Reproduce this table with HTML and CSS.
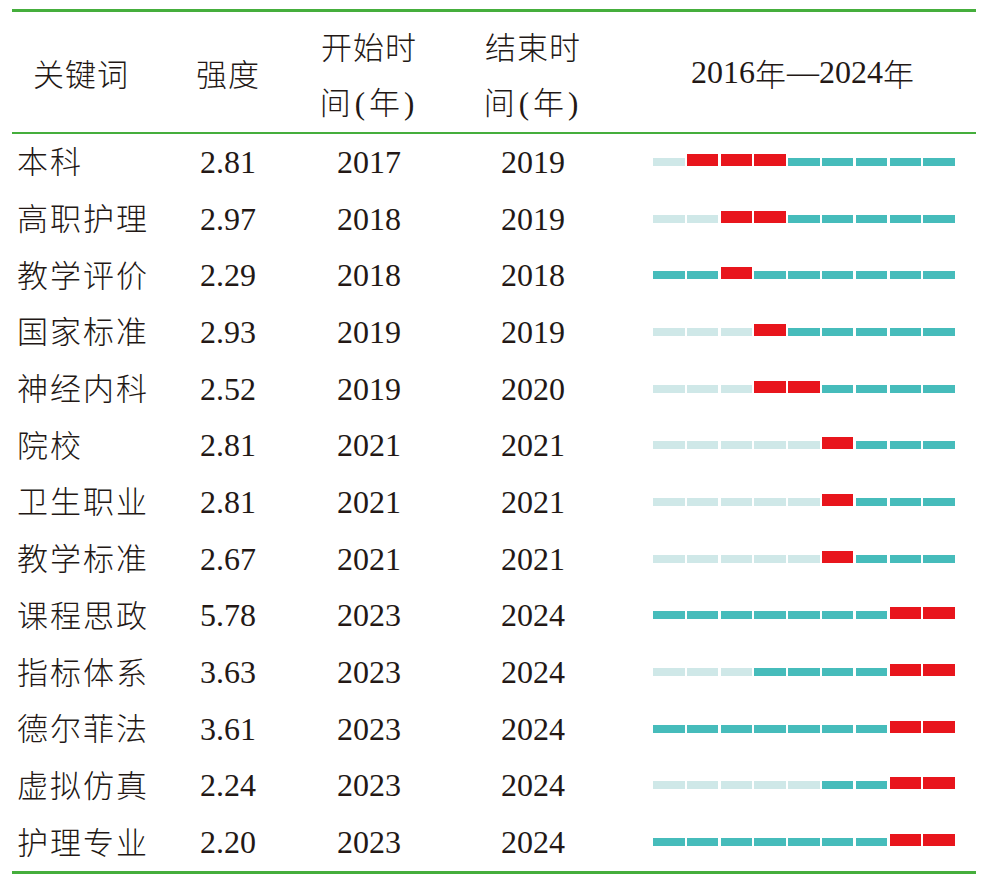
FILE: index.html
```html
<!DOCTYPE html>
<html lang="zh-CN">
<head>
<meta charset="utf-8">
<title>关键词突现</title>
<link rel="stylesheet" href="styles.css">
</head>
<body>
<div class="table">
  <div class="row head">
    <div class="cell c-kw">关键词</div>
    <div class="cell c-num cjk">强度</div>
    <div class="cell c-num cjk two">开始时<br>间<span class="paren">(</span>年<span class="paren">)</span></div>
    <div class="cell c-num cjk two">结束时<br>间<span class="paren">(</span>年<span class="paren">)</span></div>
    <div class="cell c-chart-h"><span class="num">2016</span><span class="cjk">年</span><span class="num">—2024</span><span class="cjk">年</span></div>
  </div>

  <div class="row"><div class="cell c-kw kw">本科</div><div class="cell c-num">2.81</div><div class="cell c-num">2017</div><div class="cell c-num">2019</div>
    <div class="cell c-chart"><div class="bars"><i class="l"></i><i class="r"></i><i class="r"></i><i class="r"></i><i class="t"></i><i class="t"></i><i class="t"></i><i class="t"></i><i class="t"></i></div></div></div>

  <div class="row"><div class="cell c-kw kw">高职护理</div><div class="cell c-num">2.97</div><div class="cell c-num">2018</div><div class="cell c-num">2019</div>
    <div class="cell c-chart"><div class="bars"><i class="l"></i><i class="l"></i><i class="r"></i><i class="r"></i><i class="t"></i><i class="t"></i><i class="t"></i><i class="t"></i><i class="t"></i></div></div></div>

  <div class="row"><div class="cell c-kw kw">教学评价</div><div class="cell c-num">2.29</div><div class="cell c-num">2018</div><div class="cell c-num">2018</div>
    <div class="cell c-chart"><div class="bars"><i class="t"></i><i class="t"></i><i class="r"></i><i class="t"></i><i class="t"></i><i class="t"></i><i class="t"></i><i class="t"></i><i class="t"></i></div></div></div>

  <div class="row"><div class="cell c-kw kw">国家标准</div><div class="cell c-num">2.93</div><div class="cell c-num">2019</div><div class="cell c-num">2019</div>
    <div class="cell c-chart"><div class="bars"><i class="l"></i><i class="l"></i><i class="l"></i><i class="r"></i><i class="t"></i><i class="t"></i><i class="t"></i><i class="t"></i><i class="t"></i></div></div></div>

  <div class="row"><div class="cell c-kw kw">神经内科</div><div class="cell c-num">2.52</div><div class="cell c-num">2019</div><div class="cell c-num">2020</div>
    <div class="cell c-chart"><div class="bars"><i class="l"></i><i class="l"></i><i class="l"></i><i class="r"></i><i class="r"></i><i class="t"></i><i class="t"></i><i class="t"></i><i class="t"></i></div></div></div>

  <div class="row"><div class="cell c-kw kw">院校</div><div class="cell c-num">2.81</div><div class="cell c-num">2021</div><div class="cell c-num">2021</div>
    <div class="cell c-chart"><div class="bars"><i class="l"></i><i class="l"></i><i class="l"></i><i class="l"></i><i class="l"></i><i class="r"></i><i class="t"></i><i class="t"></i><i class="t"></i></div></div></div>

  <div class="row"><div class="cell c-kw kw">卫生职业</div><div class="cell c-num">2.81</div><div class="cell c-num">2021</div><div class="cell c-num">2021</div>
    <div class="cell c-chart"><div class="bars"><i class="l"></i><i class="l"></i><i class="l"></i><i class="l"></i><i class="l"></i><i class="r"></i><i class="t"></i><i class="t"></i><i class="t"></i></div></div></div>

  <div class="row"><div class="cell c-kw kw">教学标准</div><div class="cell c-num">2.67</div><div class="cell c-num">2021</div><div class="cell c-num">2021</div>
    <div class="cell c-chart"><div class="bars"><i class="l"></i><i class="l"></i><i class="l"></i><i class="l"></i><i class="l"></i><i class="r"></i><i class="t"></i><i class="t"></i><i class="t"></i></div></div></div>

  <div class="row"><div class="cell c-kw kw">课程思政</div><div class="cell c-num">5.78</div><div class="cell c-num">2023</div><div class="cell c-num">2024</div>
    <div class="cell c-chart"><div class="bars"><i class="t"></i><i class="t"></i><i class="t"></i><i class="t"></i><i class="t"></i><i class="t"></i><i class="t"></i><i class="r"></i><i class="r"></i></div></div></div>

  <div class="row"><div class="cell c-kw kw">指标体系</div><div class="cell c-num">3.63</div><div class="cell c-num">2023</div><div class="cell c-num">2024</div>
    <div class="cell c-chart"><div class="bars"><i class="l"></i><i class="l"></i><i class="l"></i><i class="t"></i><i class="t"></i><i class="t"></i><i class="t"></i><i class="r"></i><i class="r"></i></div></div></div>

  <div class="row"><div class="cell c-kw kw">德尔菲法</div><div class="cell c-num">3.61</div><div class="cell c-num">2023</div><div class="cell c-num">2024</div>
    <div class="cell c-chart"><div class="bars"><i class="t"></i><i class="t"></i><i class="t"></i><i class="t"></i><i class="t"></i><i class="t"></i><i class="t"></i><i class="r"></i><i class="r"></i></div></div></div>

  <div class="row"><div class="cell c-kw kw">虚拟仿真</div><div class="cell c-num">2.24</div><div class="cell c-num">2023</div><div class="cell c-num">2024</div>
    <div class="cell c-chart"><div class="bars"><i class="l"></i><i class="l"></i><i class="l"></i><i class="l"></i><i class="l"></i><i class="t"></i><i class="t"></i><i class="r"></i><i class="r"></i></div></div></div>

  <div class="row last"><div class="cell c-kw kw">护理专业</div><div class="cell c-num">2.20</div><div class="cell c-num">2023</div><div class="cell c-num">2024</div>
    <div class="cell c-chart"><div class="bars"><i class="t"></i><i class="t"></i><i class="t"></i><i class="t"></i><i class="t"></i><i class="t"></i><i class="t"></i><i class="r"></i><i class="r"></i></div></div></div>
</div>
</body>
</html>
```

FILE: styles.css
```css
html, body {
  margin: 0;
  padding: 0;
  background: #ffffff;
}

body {
  color: #231815;
  font-family: "Liberation Serif", "Noto Sans CJK SC", serif;
  font-size: 32px;
}

.cjk, .kw, .c-kw {
  font-family: "Noto Sans CJK SC", "Noto Sans CJK JP", sans-serif;
  font-weight: 300;
  letter-spacing: 1px;
}

.num {
  font-family: "Liberation Serif", serif;
}

.table {
  margin: 9px 0 0 12px;
  width: 964px;
  border-top: 3px solid #45ae3c;
  border-bottom: 3px solid #45ae3c;
}

.row {
  display: grid;
  grid-template-columns: 138px 156px 126px 202px 342px;
  height: 56.7px;
}

.row.head {
  height: 120px;
  border-bottom: 2px solid #45ae3c;
}

.cell {
  display: flex;
  align-items: center;
  justify-content: center;
  white-space: nowrap;
}

.head .cell {
  box-sizing: border-box;
  font-family: "Noto Sans CJK SC", "Noto Sans CJK JP", sans-serif;
  font-weight: 300;
  letter-spacing: 1px;
  font-size: 31px;
}

.head .two {
  display: block;
  line-height: 55px;
  text-align: center;
  padding-top: 6px;
}

.paren {
  font-family: "Liberation Serif", serif;
  margin: 0 3px;
}

.head .c-chart-h {
  letter-spacing: 0;
  padding-right: 4px;
}

.head .c-chart-h .num {
  font-family: "Liberation Serif", serif;
  font-size: 32px;
  font-weight: 400;
}

.c-kw.kw {
  justify-content: flex-start;
  box-sizing: border-box;
  padding-left: 5px;
  padding-bottom: 5px;
  font-size: 31px;
  letter-spacing: 2px;
}

.c-chart {
  justify-content: flex-start;
  padding-left: 19px;
}

.bars {
  display: grid;
  grid-template-columns: repeat(9, 31.5px);
  column-gap: 2.3px;
  align-items: end;
  height: 12px;
  margin-bottom: 5px;
}

.bars i {
  display: block;
  height: 8px;
}

.bars i.l {
  background: #cfe8e8;
}

.bars i.t {
  background: #46bcbb;
}

.bars i.r {
  height: 12px;
  background: #e8151c;
}
```
